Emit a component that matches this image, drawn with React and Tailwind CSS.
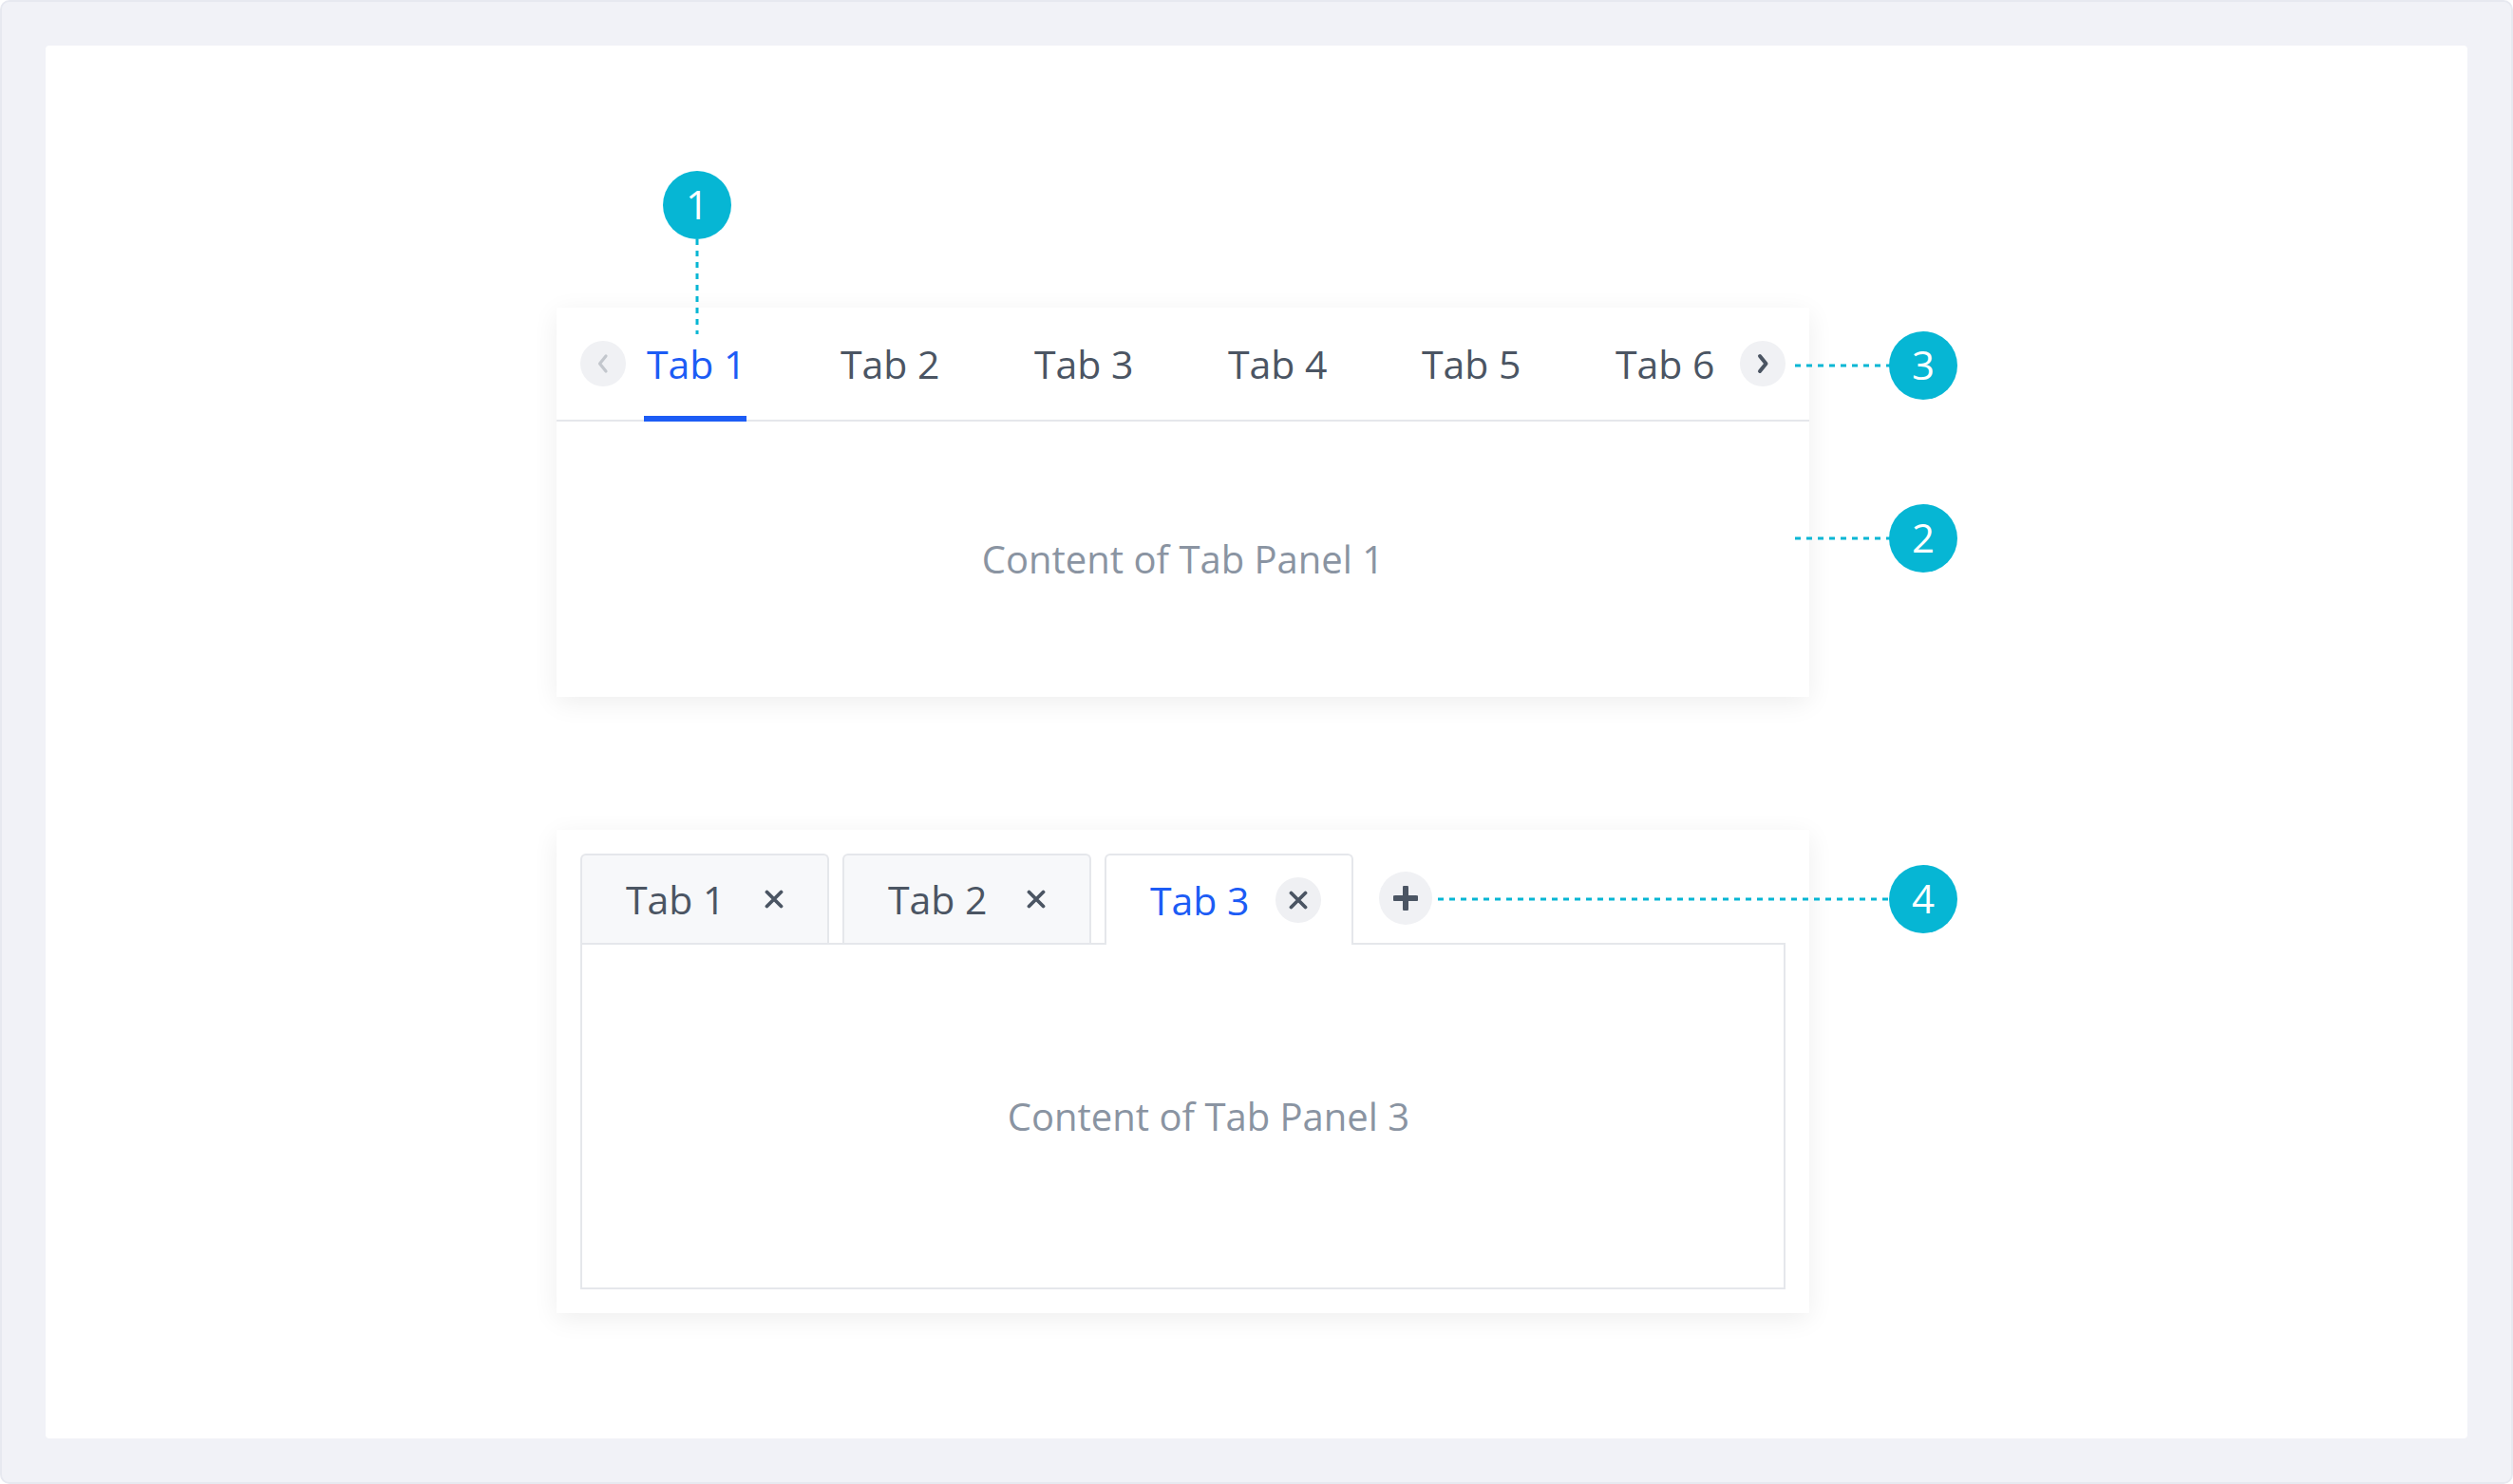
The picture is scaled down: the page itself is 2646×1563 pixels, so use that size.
import React from "react";

const FONT = { fontFamily: '"Open Sans", "Noto Sans", sans-serif' };

function Badge({ n, left, top }) {
  return (
    <div
      className="absolute w-[72px] h-[72px] rounded-full bg-[#06b6d4] flex items-center justify-center text-white text-[42px] leading-none"
      style={{ left, top }}
    >
      <span className="-mt-[2px]">{n}</span>
    </div>
  );
}

function HLine({ left, top, width }) {
  return (
    <svg className="absolute" style={{ left, top: top - 2 }} width={width} height="4">
      <line x1="0" y1="2" x2={width} y2="2" stroke="#06b6d4" strokeWidth="3" strokeDasharray="6 6" />
    </svg>
  );
}

function VLine({ left, top, height }) {
  return (
    <svg className="absolute" style={{ left: left - 2, top }} width="4" height={height}>
      <line x1="2" y1="0" x2="2" y2={height} stroke="#06b6d4" strokeWidth="3" strokeDasharray="6 6" />
    </svg>
  );
}

function Chevron({ dir, color, width = 3 }) {
  return (
    <svg width="22" height="22" viewBox="0 0 22 22" fill="none">
      {dir === "left" ? (
        <path d="M14 3 L7.5 11 L14 19" stroke={color} strokeWidth={width} strokeLinecap="round" strokeLinejoin="round" />
      ) : (
        <path d="M8 3 L14.5 11 L8 19" stroke={color} strokeWidth={width} strokeLinecap="round" strokeLinejoin="round" />
      )}
    </svg>
  );
}

function XIcon() {
  return (
    <svg width="20" height="20" viewBox="0 0 20 20" fill="none">
      <path d="M2.5 2.5 L17.5 17.5 M17.5 2.5 L2.5 17.5" stroke="#4b5563" strokeWidth="3.8" strokeLinecap="round" />
    </svg>
  );
}

function PlusIcon() {
  return (
    <svg width="26" height="26" viewBox="0 0 26 26" fill="none">
      <path d="M13 2 V24 M2 13 H24" stroke="#4b5563" strokeWidth="6" strokeLinecap="round" />
    </svg>
  );
}

export default function App() {
  const tabs = ["Tab 1", "Tab 2", "Tab 3", "Tab 4", "Tab 5", "Tab 6"];
  const cardTabs = ["Tab 1", "Tab 2", "Tab 3"];
  return (
    <div className="w-[2646px] h-[1563px] bg-[#f1f2f7] p-[46px] border-2 border-[#e7e9f0] rounded-[10px]" style={FONT}>
      <div className="relative w-full h-full bg-white rounded-[4px] pl-[538px] pt-[276px] flex flex-col gap-[140px]">
        {/* Top card: scrollable tabs */}
        <div className="w-[1319px] h-[410px] bg-white shadow-[0_6px_26px_rgba(0,0,0,0.07)] flex flex-col">
          <div className="h-[120px] border-b-2 border-[#e5e7eb] flex items-center pl-[25px]">
            <div className="w-[48px] h-[48px] rounded-full bg-[#f0f1f4] flex items-center justify-center">
              <Chevron dir="left" color="#c3c7cd" width={3.2} />
            </div>
            <div className="flex h-full ml-[22px] gap-[99px]">
              {tabs.map((t, i) => (
                <div key={t} className="relative w-[105px] h-full flex items-center">
                  <span
                    className={
                      "whitespace-nowrap text-[41px] leading-none " +
                      (i === 0 ? "text-[#1c5cf5]" : "text-[#4b5563]")
                    }
                  >
                    {t}
                  </span>
                  {i === 0 && (
                    <div className="absolute left-[-3px] w-[108px] bottom-[-2px] h-[6px] bg-[#1c5cf5]" />
                  )}
                </div>
              ))}
            </div>
            <div className="ml-[26px] w-[48px] h-[48px] rounded-full bg-[#f0f1f4] flex items-center justify-center">
              <Chevron dir="right" color="#4b5563" width={4} />
            </div>
          </div>
          <div className="flex-1 flex items-center justify-center">
            <span className="text-[40px] text-[#8a94a2] leading-none">Content of Tab Panel 1</span>
          </div>
        </div>

        {/* Bottom card: editable card tabs */}
        <div className="w-[1319px] h-[509px] bg-white shadow-[0_6px_26px_rgba(0,0,0,0.07)] p-[25px] flex flex-col">
          <div className="h-[94px] flex items-start gap-[14px]">
            {cardTabs.map((t, i) => {
              const active = i === 2;
              return (
                <div
                  key={t}
                  className={
                    "relative w-[262px] border-2 border-b-0 border-[#e5e7eb] rounded-t-[6px] flex items-center pl-[46px] " +
                    (active ? "h-[96px] bg-white z-10" : "h-[94px] bg-[#f7f8fa]")
                  }
                >
                  <span
                    className={
                      "whitespace-nowrap text-[41px] leading-none w-[132px] " +
                      (active ? "text-[#1c5cf5]" : "text-[#4b5563]")
                    }
                  >
                    {t}
                  </span>
                  <div
                    className={
                      "w-[48px] h-[48px] rounded-full flex items-center justify-center " +
                      (active ? "bg-[#eff0f3]" : "")
                    }
                  >
                    <XIcon />
                  </div>
                </div>
              );
            })}
            <div className="self-center ml-[13px] w-[56px] h-[56px] rounded-full bg-[#f0f1f4] flex items-center justify-center">
              <PlusIcon />
            </div>
          </div>
          <div className="flex-1 border-2 border-[#e5e7eb] flex items-center justify-center pl-[54px]">
            <span className="text-[40px] text-[#8a94a2] leading-none">Content of Tab Panel 3</span>
          </div>
        </div>

        {/* Annotations */}
        <VLine left={686} top={204} height={100} />
        <Badge n="1" left={650} top={132} />
        <HLine left={1842} top={337} width={100} />
        <Badge n="3" left={1941} top={301} />
        <HLine left={1842} top={519} width={100} />
        <Badge n="2" left={1941} top={483} />
        <HLine left={1466} top={899} width={476} />
        <Badge n="4" left={1941} top={863} />
      </div>
    </div>
  );
}
